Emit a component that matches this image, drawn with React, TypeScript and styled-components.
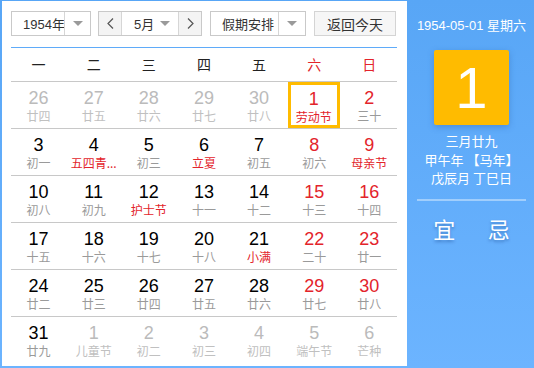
import React from 'react';
import styled, { createGlobalStyle, css } from 'styled-components';

const GlobalStyle = createGlobalStyle`
  html, body {
    margin: 0;
    padding: 0;
    background: #fff;
  }
  body {
    font-family: "Liberation Sans", "Noto Sans CJK SC", sans-serif;
  }
`;

const BLUE = '#5fabf9';
const RED = '#e3242b';
const ORANGE = '#ffbb00';

type Kind = 'cur' | 'other';
type Day = { d: number; l: string; kind?: Kind; fest?: boolean };

const ROWS: Day[][] = [
  [
    { d: 26, l: '廿四', kind: 'other' },
    { d: 27, l: '廿五', kind: 'other' },
    { d: 28, l: '廿六', kind: 'other' },
    { d: 29, l: '廿七', kind: 'other' },
    { d: 30, l: '廿八', kind: 'other' },
    { d: 1, l: '劳动节', fest: true },
    { d: 2, l: '三十' },
  ],
  [
    { d: 3, l: '初一' },
    { d: 4, l: '五四青...', fest: true },
    { d: 5, l: '初三' },
    { d: 6, l: '立夏', fest: true },
    { d: 7, l: '初五' },
    { d: 8, l: '初六' },
    { d: 9, l: '母亲节', fest: true },
  ],
  [
    { d: 10, l: '初八' },
    { d: 11, l: '初九' },
    { d: 12, l: '护士节', fest: true },
    { d: 13, l: '十一' },
    { d: 14, l: '十二' },
    { d: 15, l: '十三' },
    { d: 16, l: '十四' },
  ],
  [
    { d: 17, l: '十五' },
    { d: 18, l: '十六' },
    { d: 19, l: '十七' },
    { d: 20, l: '十八' },
    { d: 21, l: '小满', fest: true },
    { d: 22, l: '二十' },
    { d: 23, l: '廿一' },
  ],
  [
    { d: 24, l: '廿二' },
    { d: 25, l: '廿三' },
    { d: 26, l: '廿四' },
    { d: 27, l: '廿五' },
    { d: 28, l: '廿六' },
    { d: 29, l: '廿七' },
    { d: 30, l: '廿八' },
  ],
  [
    { d: 31, l: '廿九' },
    { d: 1, l: '儿童节', kind: 'other' },
    { d: 2, l: '初二', kind: 'other' },
    { d: 3, l: '初三', kind: 'other' },
    { d: 4, l: '初四', kind: 'other' },
    { d: 5, l: '端午节', kind: 'other' },
    { d: 6, l: '芒种', kind: 'other' },
  ],
];

const WEEK = ['一', '二', '三', '四', '五', '六', '日'];

const Caret = () => (
  <svg width="10" height="6" viewBox="0 0 10 6">
    <path d="M0 0 L10 0 L5 5 Z" fill="#9a9a9a" />
  </svg>
);

const Chevron: React.FC<{ dir: 'l' | 'r' }> = ({ dir }) => (
  <svg width="7" height="11" viewBox="0 0 7 11">
    <path
      d={dir === 'l' ? 'M6 0.5 L1 5.5 L6 10.5' : 'M1 0.5 L6 5.5 L1 10.5'}
      stroke="#555"
      strokeWidth="1.2"
      fill="none"
    />
  </svg>
);

export const App: React.FC = () => (
  <>
    <GlobalStyle />
    <Frame>
      <Main>
        <Toolbar>
          <Select $w={80} $arrow={25}>
            <SelectText>1954年</SelectText>
            <ArrowBox>
              <Caret />
            </ArrowBox>
          </Select>
          <MonthGroup>
            <NavBtn>
              <Chevron dir="l" />
            </NavBtn>
            <MonthSel>
              <span>5月</span>
              <Caret />
            </MonthSel>
            <NavBtn $right>
              <Chevron dir="r" />
            </NavBtn>
          </MonthGroup>
          <Select $w={96} $arrow={26}>
            <SelectText>假期安排</SelectText>
            <ArrowBox>
              <Caret />
            </ArrowBox>
          </Select>
          <TodayBtn>返回今天</TodayBtn>
        </Toolbar>
        <WeekHead>
          {WEEK.map((w, i) => (
            <WeekCell key={w} $weekend={i >= 5}>
              {w}
            </WeekCell>
          ))}
        </WeekHead>
        <Grid>
          {ROWS.map((row, r) => (
            <Row key={r} $last={r === ROWS.length - 1}>
              {row.map((day, c) => (
                <Cell key={c} $selected={r === 0 && c === 5}>
                  <Num $weekend={c >= 5} $other={day.kind === 'other'}>
                    {day.d}
                  </Num>
                  <Lunar $fest={!!day.fest} $other={day.kind === 'other'}>
                    {day.l}
                  </Lunar>
                </Cell>
              ))}
            </Row>
          ))}
        </Grid>
      </Main>
      <Side>
        <SideDate>1954-05-01 星期六</SideDate>
        <BigDay>1</BigDay>
        <LunarInfo>
          <div>三月廿九</div>
          <div>甲午年 【马年】</div>
          <div>戊辰月 丁巳日</div>
        </LunarInfo>
        <Divider />
        <YiJi>
          <span>宜</span>
          <span>忌</span>
        </YiJi>
      </Side>
    </Frame>
  </>
);

const Frame = styled.div`
  width: 534px;
  height: 368px;
  box-sizing: border-box;
  padding: 1px 0 2px 2px;
  display: flex;
  background: linear-gradient(180deg, #58a6f6 0%, #6cb4ff 100%);
`;

const Main = styled.div`
  width: 405px;
  background: #fff;
  box-sizing: border-box;
  padding: 10px 10px 0 9px;
  display: flex;
  flex-direction: column;
`;

const Toolbar = styled.div`
  display: flex;
  align-items: center;
  height: 25px;
  padding-bottom: 11px;
  border-bottom: 1px solid ${BLUE};
`;

const boxBase = css`
  height: 25px;
  box-sizing: border-box;
  border: 1px solid #c9c9c9;
  display: flex;
  align-items: center;
  font-size: 13px;
  color: #333;
  font-family: "Liberation Sans", "Noto Sans CJK SC", sans-serif;
`;

const Select = styled.div<{ $w: number; $arrow: number }>`
  ${boxBase}
  width: ${(p) => p.$w}px;
  margin-right: 7px;
  background: #fff;
  & > div:last-child {
    width: ${(p) => p.$arrow}px;
  }
`;

const SelectText = styled.div`
  flex: 1;
  padding-left: 11px;
  white-space: nowrap;
  overflow: hidden;
`;

const ArrowBox = styled.div`
  height: 100%;
  border-left: 1px solid #d6d6d6;
  display: flex;
  align-items: center;
  justify-content: center;
`;

const MonthGroup = styled.div`
  ${boxBase}
  width: 104px;
  margin-right: 8px;
`;

const NavBtn = styled.div<{ $right?: boolean }>`
  width: 22px;
  height: 100%;
  background: #f4f4f4;
  display: flex;
  align-items: center;
  justify-content: center;
  ${(p) => (p.$right ? 'border-left' : 'border-right')}: 1px solid #d6d6d6;
`;

const MonthSel = styled.div`
  flex: 1;
  display: flex;
  align-items: center;
  justify-content: space-between;
  padding: 0 8px 0 12px;
`;

const TodayBtn = styled.div`
  ${boxBase}
  width: 82px;
  margin-left: 1px;
  justify-content: center;
  background: #f6f6f6;
  border-color: #d4d4d4;
  font-size: 14px;
`;

const WeekHead = styled.div`
  display: grid;
  grid-template-columns: repeat(7, 1fr);
  height: 33px;
  border-bottom: 1px solid #c8c8c8;
`;

const WeekCell = styled.div<{ $weekend: boolean }>`
  text-align: center;
  line-height: 33px;
  font-size: 14px;
  color: ${(p) => (p.$weekend ? RED : '#222')};
  font-family: "Noto Sans CJK SC", sans-serif;
`;

const Grid = styled.div`
  display: flex;
  flex-direction: column;
`;

const Row = styled.div<{ $last: boolean }>`
  display: grid;
  grid-template-columns: repeat(7, 1fr);
  height: 46px;
  border-bottom: ${(p) => (p.$last ? 'none' : '1px solid #c8c8c8')};
`;

const Cell = styled.div<{ $selected: boolean }>`
  display: flex;
  flex-direction: column;
  align-items: center;
  box-sizing: border-box;
  padding-top: 6px;
  ${(p) =>
    p.$selected &&
    css`
      border: 3px solid ${ORANGE};
      margin: 0 2px 3px 1px;
      padding-top: 4px;
    `}
`;

const Num = styled.div<{ $weekend: boolean; $other: boolean }>`
  font-size: 18px;
  line-height: 20px;
  color: ${(p) => (p.$other ? '#bbbbbb' : p.$weekend ? RED : '#000')};
`;

const Lunar = styled.div<{ $fest: boolean; $other: boolean }>`
  font-family: "Noto Sans CJK SC", sans-serif;
  font-size: 12px;
  line-height: 16px;
  white-space: nowrap;
  color: ${(p) => (p.$other ? '#c0c0c0' : p.$fest ? RED : '#9a9a9a')};
`;

const Side = styled.div`
  flex: 1;
  display: flex;
  flex-direction: column;
  align-items: center;
  padding: 0 8px 0 10px;
  color: #fff;
`;

const SideDate = styled.div`
  font-size: 13px;
  margin-top: 16px;
  line-height: 18px;
  white-space: nowrap;
  font-family: "Liberation Sans", "Noto Sans CJK SC", sans-serif;
`;

const BigDay = styled.div`
  width: 75px;
  height: 75px;
  margin-top: 15px;
  border-radius: 2px;
  background: ${ORANGE};
  box-shadow: 0 2px 6px rgba(40, 90, 160, 0.35);
  display: flex;
  align-items: center;
  justify-content: center;
  font-size: 58px;
  line-height: 1;
  color: #fff;
`;

const LunarInfo = styled.div`
  margin-top: 7px;
  text-align: center;
  font-family: "Noto Sans CJK SC", sans-serif;
  font-size: 13px;
  line-height: 18.5px;
  white-space: nowrap;
`;

const Divider = styled.div`
  align-self: stretch;
  height: 2px;
  margin-top: 11px;
  background: rgba(255, 255, 255, 0.4);
`;

const YiJi = styled.div`
  align-self: stretch;
  display: flex;
  justify-content: space-around;
  margin-top: 13px;
  font-family: "Noto Sans CJK SC", sans-serif;
  font-size: 22px;
  line-height: 28px;
  text-shadow: 0 2px 3px rgba(0, 40, 110, 0.35);
`;

export default App;
